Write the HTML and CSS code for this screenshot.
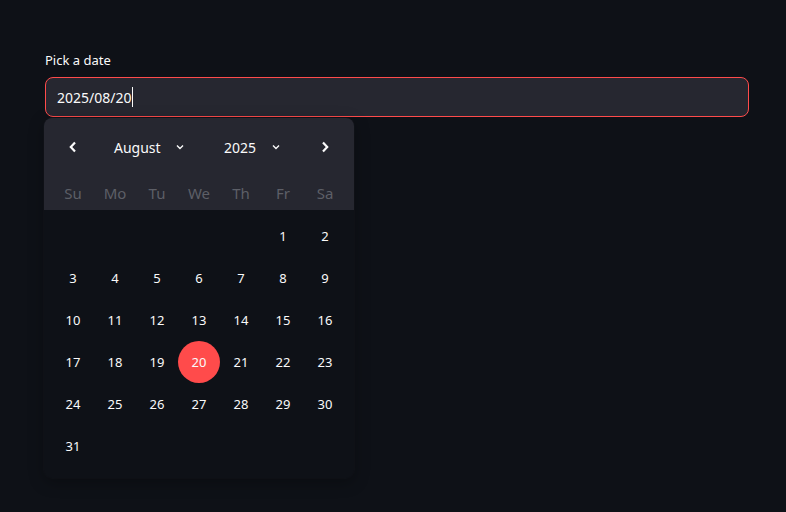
FILE: index.html
```html
<!DOCTYPE html>
<html>
<head>
<meta charset="utf-8">
<link rel="stylesheet" href="styles.css">
</head>
<body>
<div class="main">
  <div class="field">
    <label class="label">Pick a date</label>
    <div class="input"><span class="value">2025/08/20</span><span class="caret"></span></div>
    <div class="popup">
      <div class="head">
        <div class="nav">
          <button class="arrow"><svg width="10" height="12" viewBox="0 0 10 12"><path d="M7 1.5 L2.8 6 L7 10.5" fill="none" stroke="#fafafa" stroke-width="2.2"/></svg></button>
          <div class="selects">
            <div class="sel month"><span>August</span><svg width="8" height="6" viewBox="0 0 8 6"><path d="M1 1.5 L4 4.5 L7 1.5" fill="none" stroke="#fafafa" stroke-width="1.4"/></svg></div>
            <div class="sel year"><span>2025</span><svg width="8" height="6" viewBox="0 0 8 6"><path d="M1 1.5 L4 4.5 L7 1.5" fill="none" stroke="#fafafa" stroke-width="1.4"/></svg></div>
          </div>
          <button class="arrow"><svg width="10" height="12" viewBox="0 0 10 12"><path d="M3 1.5 L7.2 6 L3 10.5" fill="none" stroke="#fafafa" stroke-width="2.2"/></svg></button>
        </div>
        <div class="week">
          <span>Su</span><span>Mo</span><span>Tu</span><span>We</span><span>Th</span><span>Fr</span><span>Sa</span>
        </div>
      </div>
      <div class="days">
        <span></span><span></span><span></span><span></span><span></span><span>1</span><span>2</span>
        <span>3</span><span>4</span><span>5</span><span>6</span><span>7</span><span>8</span><span>9</span>
        <span>10</span><span>11</span><span>12</span><span>13</span><span>14</span><span>15</span><span>16</span>
        <span>17</span><span>18</span><span>19</span><span class="sel-day">20</span><span>21</span><span>22</span><span>23</span>
        <span>24</span><span>25</span><span>26</span><span>27</span><span>28</span><span>29</span><span>30</span>
        <span>31</span>
      </div>
    </div>
  </div>
</div>
</body>
</html>
```

FILE: styles.css
```css
* { box-sizing: border-box; }
html, body {
  margin: 0;
  background: #0e1117;
  color: #fafafa;
  font-family: "Source Sans Pro", "Noto Sans", sans-serif;
}
.main {
  padding: 51px 37px 0 45px;
  height: 512px;
}
.field {
  position: relative;
  width: 704px;
}
.label {
  display: block;
  font-size: 13px;
  line-height: 18px;
  height: 26px;
  color: #fafafa;
}
.input {
  height: 40px;
  border: 1px solid #ff4b4b;
  border-radius: 8px;
  background: #262730;
  display: flex;
  align-items: center;
  padding-left: 11px;
  font-size: 14px;
}
.caret {
  width: 1px;
  height: 20px;
  background: #fafafa;
  margin-left: 1px;
}
.popup {
  position: absolute;
  left: -1px;
  top: 67px;
  width: 310px;
  border-radius: 8px;
  overflow: hidden;
  background: #0e1117;
  box-shadow: 0 0 0 1px rgba(255,255,255,0.015), 0 4px 16px rgba(0,0,0,0.3);
}
.head {
  background: #262730;
  height: 92px;
  padding: 0 8px;
}
.nav {
  height: 58px;
  display: flex;
  align-items: center;
}
.arrow {
  width: 42px;
  height: 42px;
  background: none;
  border: 0;
  padding: 0;
  display: flex;
  align-items: center;
  justify-content: center;
}
.selects {
  flex: 1;
  display: flex;
  padding-left: 20px;
  gap: 40px;
  font-size: 14px;
}
.sel {
  display: flex;
  align-items: center;
}
.month span { width: 62px; }
.year span { width: 48px; }
.week {
  height: 34px;
  display: grid;
  grid-template-columns: repeat(7, 42px);
  align-items: center;
  justify-items: center;
  font-size: 15px;
  color: #5d5f67;
}
.days {
  padding: 5px 8px 11px;
  display: grid;
  grid-template-columns: repeat(7, 42px);
  grid-auto-rows: 42px;
  font-size: 13px;
}
.days span {
  display: flex;
  align-items: center;
  justify-content: center;
  border-radius: 50%;
}
.days .sel-day {
  background: #ff4b4b;
}
```
